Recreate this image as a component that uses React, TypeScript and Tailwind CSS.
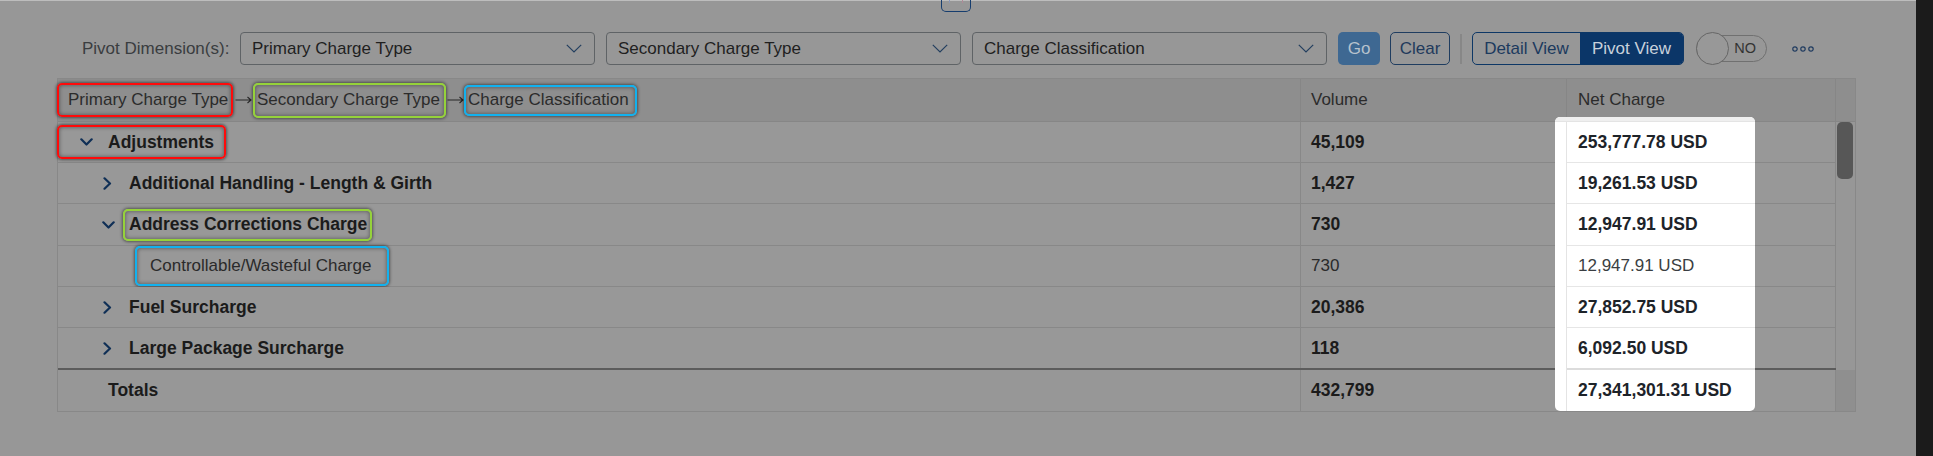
import React from "react";

type Row = {
  label: string;
  kind: "l1" | "l2" | "l2open" | "l3" | "total";
  vol: string;
  net: string;
  bold: boolean;
  h: string;
  last?: boolean;
};

const rows: Row[] = [
  { label: "Adjustments", kind: "l1", vol: "45,109", net: "253,777.78 USD", bold: true, h: "h-[41px]" },
  { label: "Additional Handling - Length & Girth", kind: "l2", vol: "1,427", net: "19,261.53 USD", bold: true, h: "h-[41px]" },
  { label: "Address Corrections Charge", kind: "l2open", vol: "730", net: "12,947.91 USD", bold: true, h: "h-[42px]" },
  { label: "Controllable/Wasteful Charge", kind: "l3", vol: "730", net: "12,947.91 USD", bold: false, h: "h-[41px]" },
  { label: "Fuel Surcharge", kind: "l2", vol: "20,386", net: "27,852.75 USD", bold: true, h: "h-[41px]" },
  { label: "Large Package Surcharge", kind: "l2", vol: "118", net: "6,092.50 USD", bold: true, h: "h-[42px]", last: true },
];

const box = "rounded-[5px] border-2 shadow-[0_0_3px_1px_rgba(0,0,0,0.45),inset_0_0_4px_rgba(0,0,0,0.45)]";

const ChevronDown = () => (
  <svg width="13" height="8" viewBox="0 0 13 8" className="shrink-0">
    <path d="M1.3 1.3 L6.5 6.5 L11.7 1.3" fill="none" stroke="#0f2f56" strokeWidth="2.2" strokeLinecap="round" strokeLinejoin="round" />
  </svg>
);

const ChevronRight = () => (
  <svg width="9" height="13" viewBox="0 0 9 13" className="shrink-0">
    <path d="M1.5 1.3 L7 6.5 L1.5 11.7" fill="none" stroke="#0f2f56" strokeWidth="2.2" strokeLinecap="round" strokeLinejoin="round" />
  </svg>
);

const Arrow = ({ w }: { w: string }) => (
  <div className={`${w} flex items-center justify-center`}>
    <svg width="17" height="8" viewBox="0 0 17 8">
      <path d="M0.5 4 H15.8 M12.5 1 L16 4 L12.5 7" fill="none" stroke="#262626" strokeWidth="1.1" />
    </svg>
  </div>
);

const SelectBox = ({ text, ml }: { text: string; ml: string }) => (
  <div className={`${ml} w-[355px] h-[33px] shrink-0 border border-[#5f6366] rounded-[4px] flex items-center justify-between pl-[11px] pr-[12px] text-[17px] text-[#1f1f1f]`}>
    <span>{text}</span>
    <svg width="16" height="9" viewBox="0 0 16 9">
      <path d="M0.8 0.8 L8 8 L15.2 0.8" fill="none" stroke="#233f5f" strokeWidth="1.2" />
    </svg>
  </div>
);

const FirstCell = ({ r }: { r: Row }) => {
  const txt = r.bold ? "font-bold text-[17.5px] text-[#1b1b1b]" : "text-[17px] text-[#2a2a2a]";
  if (r.kind === "l1")
    return (
      <div className={`${box} border-[#ff0a0a] ml-[-1px] w-[169px] h-[34px] flex items-center pl-[21px]`}>
        <ChevronDown />
        <span className={`ml-[15px] ${txt}`}>{r.label}</span>
      </div>
    );
  if (r.kind === "l2open")
    return (
      <div className="flex items-center pl-[43px]">
        <div className="w-[22px] flex items-center pl-[1px]">
          <ChevronDown />
        </div>
        <div className={`${box} border-[#95d23a] h-[32px] flex items-center pl-[4px] pr-[3px]`}>
          <span className={txt}>{r.label}</span>
        </div>
      </div>
    );
  if (r.kind === "l3")
    return (
      <div className="pl-[77px]">
        <div className={`${box} border-[#12b1ee] w-[254px] h-[40px] flex items-center pl-[13px]`}>
          <span className={txt}>{r.label}</span>
        </div>
      </div>
    );
  return (
    <div className="flex items-center pl-[43px]">
      <div className="w-[28px] flex items-center pl-[2px]">
        <ChevronRight />
      </div>
      <span className={txt}>{r.label}</span>
    </div>
  );
};

export default function App() {
  return (
    <div className="w-[1933px] h-[456px] flex overflow-hidden whitespace-nowrap font-['Liberation_Sans',Arial,sans-serif]">
      <div className="w-[1916px] h-full bg-[#979797] flex flex-col">
        <div className="h-[1px] bg-[#bdbdbd]" />
        {/* collapse handle */}
        <div className="h-[31px] flex items-start">
          <div className="ml-[941px] mt-[-1px] w-[30px] h-[12px] border border-t-0 border-[#163d6e] rounded-b-[5px] flex justify-between px-[7px]">
            <div className="w-[1px] h-[3px] bg-[#8a98b8]" />
            <div className="w-[1px] h-[3px] bg-[#b08a98]" />
          </div>
        </div>

        {/* toolbar */}
        <div className="h-[33px] flex items-center">
          <span className="ml-[82px] w-[158px] shrink-0 text-[17px] text-[#3a3d40]">Pivot Dimension(s):</span>
          <SelectBox ml="ml-0" text="Primary Charge Type" />
          <SelectBox ml="ml-[11px]" text="Secondary Charge Type" />
          <SelectBox ml="ml-[11px]" text="Charge Classification" />
          <div className="ml-[11px] w-[42px] h-[33px] rounded-[5px] bg-[#3e6892] flex items-center justify-center text-[17px] text-[#b7c2cd]">Go</div>
          <div className="ml-[10px] w-[60px] h-[33px] rounded-[5px] border border-[#1f3d60] flex items-center justify-center text-[17px] text-[#1f3a5c]">Clear</div>
          <div className="ml-[10px] w-[2px] h-[30px] bg-[#878787]" />
          <div className="ml-[10px] w-[212px] h-[33px] rounded-[5px] border border-[#0d3766] overflow-hidden flex text-[17px]">
            <div className="w-[107px] flex items-center justify-center text-[#1c3a5e]">Detail View</div>
            <div className="flex-1 bg-[#0b3668] flex items-center justify-center text-[#c8d1dc]">Pivot View</div>
          </div>
          <div className="ml-[12px] relative w-[71px] h-[33px] flex items-center">
            <div className="w-full h-[27px] rounded-full border border-[#707070] flex items-center justify-end pr-[10px] text-[14.5px] text-[#333]">NO</div>
            <div className="absolute left-0 top-0 w-[33px] h-[33px] rounded-full border border-[#666] bg-[#989898]" />
          </div>
          <svg className="ml-[25px]" width="22" height="6" viewBox="0 0 22 6">
            <circle cx="3" cy="3" r="2.2" fill="none" stroke="#1e3a5f" strokeWidth="1.2" />
            <circle cx="11" cy="3" r="2.2" fill="none" stroke="#1e3a5f" strokeWidth="1.2" />
            <circle cx="19" cy="3" r="2.2" fill="none" stroke="#1e3a5f" strokeWidth="1.2" />
          </svg>
        </div>

        {/* table */}
        <div className="relative mt-[13px] ml-[57px] w-[1799px] border border-[#888] flex">
          <div className="w-[1778px] flex flex-col">
            <div className="h-[43px] flex bg-[#8e8e8e] border-b border-[#868686] text-[17px] text-[#2b2b2b]">
              <div className="w-[1243px] border-r border-[#868686] flex items-center">
                <div className={`${box} border-[#ff0a0a] ml-[-1px] w-[176px] h-[34px] flex items-center pl-[9px]`}>Primary Charge Type</div>
                <Arrow w="w-[20px]" />
                <div className={`${box} border-[#95d23a] w-[193px] h-[35px] flex items-center pl-[2px]`}>Secondary Charge Type</div>
                <Arrow w="w-[18px]" />
                <div className={`${box} border-[#12b1ee] w-[173px] h-[31px] flex items-center pl-[2px]`}>Charge Classification</div>
              </div>
              <div className="w-[266px] border-r border-[#868686] flex items-center pl-[10px]">Volume</div>
              <div className="w-[269px] border-r border-[#868686] flex items-center pl-[11px]">Net Charge</div>
            </div>
            {rows.map((r) => (
              <div
                key={r.label}
                className={`${r.h} flex bg-[#989898] ${r.last ? "border-b-2 border-[#5c5c5c]" : "border-b border-[#888]"}`}
              >
                <div className="w-[1243px] border-r border-[#888] flex items-center">
                  <FirstCell r={r} />
                </div>
                <div
                  className={`w-[266px] border-r border-[#888] flex items-center pl-[10px] ${
                    r.bold ? "font-bold text-[17.5px] text-[#1b1b1b]" : "text-[17px] text-[#2a2a2a]"
                  }`}
                >
                  {r.vol}
                </div>
                <div className="w-[269px] border-r border-[#888]" />
              </div>
            ))}
            <div className="h-[41px] flex bg-[#979797]">
              <div className="w-[1243px] border-r border-[#888] flex items-center pl-[50px] font-bold text-[17.5px] text-[#1b1b1b]">Totals</div>
              <div className="w-[266px] border-r border-[#888] flex items-center pl-[10px] font-bold text-[17.5px] text-[#1b1b1b]">432,799</div>
              <div className="w-[269px] border-r border-[#888]" />
            </div>
          </div>

          {/* scrollbar column */}
          <div className="w-[19px] flex flex-col">
            <div className="h-[43px] bg-[#8e8e8e] border-b border-[#868686]" />
            <div className="flex-1 bg-[#979797] pl-[1px]">
              <div className="w-[16px] h-[57px] rounded-[5px] bg-[#575757]" />
            </div>
            <div className="h-[41px] bg-[#8f8f8f]" />
          </div>

          {/* spotlight on the Net Charge column */}
          <div className="absolute left-[1497px] top-[38px] w-[200px] h-[294px] bg-white rounded-[5px] overflow-hidden flex flex-col">
            <div className="h-[5px] bg-[#efefef] border-b border-[#e4e4e4]" />
            <div className="flex-1 flex">
              <div className="w-[11px]" />
              <div className="flex-1 border-l border-[#e4e4e4] flex flex-col">
                {rows.map((r) => (
                  <div
                    key={r.label}
                    className={`${r.h} flex items-center pl-[11px] ${r.last ? "border-b-2 border-[#dcdcdc]" : "border-b border-[#e6e6e6]"} ${
                      r.bold ? "font-bold text-[17.5px] text-[#1d2329]" : "text-[17px] text-[#3a3e42]"
                    }`}
                  >
                    {r.net}
                  </div>
                ))}
                <div className="flex-1 flex items-center pl-[11px] font-bold text-[17.5px] text-[#1d2329]">27,341,301.31 USD</div>
              </div>
            </div>
          </div>
        </div>
      </div>
      <div className="w-[17px] h-full bg-[#1b1b1b]" />
    </div>
  );
}
